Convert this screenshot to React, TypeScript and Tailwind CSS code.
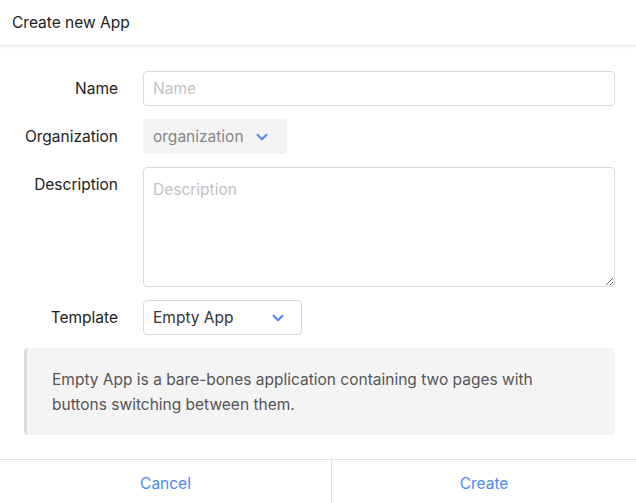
import { ChevronDown } from "lucide-react";

export default function App() {
  return (
    <div className="w-[636px] h-[503px] bg-white flex flex-col text-[#333] overflow-hidden" style={{ fontFamily: "Inter, 'Noto Sans', sans-serif" }}>
      <div className="h-[46px] flex items-center px-3 text-[15.5px] text-[#222] border-b border-[#e6e6e6] shadow-[0_1px_3px_rgba(0,0,0,0.06)]">
        Create new App
      </div>
      <div className="flex-1 flex flex-col pt-[25px] px-[21px]">
        <div className="grid grid-cols-[97px_1fr] gap-x-[25px] items-start">
          <div className="h-[35px] flex items-center justify-end text-[15.5px] text-[#222]">Name</div>
          <input placeholder="Name" className="h-[35px] w-full border border-[#d9d9d9] rounded px-[9px] text-[15.5px] placeholder-[#c2c2c2] outline-none" />

          <div className="h-[35px] mt-[13px] flex items-center justify-end text-[15.5px] text-[#222]">Organization</div>
          <div className="h-[35px] mt-[13px] w-[144px] bg-[#f3f3f3] rounded flex items-center px-[10px] gap-[9px] text-[15.5px] text-[#888]">
            organization <ChevronDown size={18} strokeWidth={2.75} className="text-[#4a8cf0]" />
          </div>

          <div className="h-[35px] mt-[13px] flex items-center justify-end text-[15.5px] text-[#222]">Description</div>
          <textarea placeholder="Description" className="mt-[13px] h-[120px] w-full border border-[#d9d9d9] rounded px-[9px] py-[10px] text-[15.5px] placeholder-[#c2c2c2] outline-none resize-y" />

          <div className="h-[35px] mt-[13px] flex items-center justify-end text-[15.5px] text-[#222]">Template</div>
          <div className="h-[35px] mt-[13px] w-[159px] border border-[#d9d9d9] rounded flex items-center justify-between px-[9px] pr-[14px] text-[15.5px] text-[#333]">
            Empty App <ChevronDown size={18} strokeWidth={2.75} className="text-[#4a8cf0]" />
          </div>
        </div>
        <div className="mt-[13px] ml-[3px] h-[87px] bg-[#f4f4f4] border-l-[3px] border-[#dcdcdc] rounded flex items-center px-[25px] text-[15.5px] leading-[25px] text-[#555]">
          Empty App is a bare-bones application containing two pages with<br />buttons switching between them.
        </div>
      </div>
      <div className="h-[44px] border-t border-[#e0e0e0] flex text-[15.5px] text-[#4a8cf0]">
        <div className="w-[332px] flex items-center justify-center pt-[4px] border-r border-[#e0e0e0]">Cancel</div>
        <div className="flex-1 flex items-center justify-center pt-[4px]">Create</div>
      </div>
    </div>
  );
}
